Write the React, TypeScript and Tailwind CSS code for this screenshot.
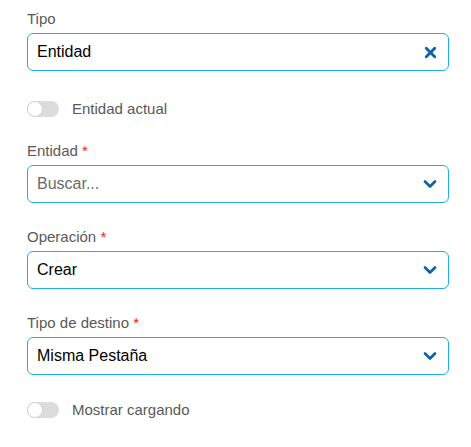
import { X, ChevronDown } from "lucide-react";

function Label({ text, required }: { text: string; required?: boolean }) {
  return (
    <div className="h-5 leading-5 text-[15px] text-[#595959] mb-1">
      {text}
      {required && <span className="text-[#f01c1c]"> *</span>}
    </div>
  );
}

function Toggle({ text, className }: { text: string; className?: string }) {
  return (
    <div className={"flex items-center h-5 " + (className ?? "")}>
      <div className="relative w-8 h-4 rounded-full bg-[#dcdcdc]">
        <div className="absolute left-0 top-0 w-4 h-4 rounded-full bg-white border border-[#d4d4d4]" />
      </div>
      <span className="ml-[13px] text-[15px] text-[#595959]">{text}</span>
    </div>
  );
}

function Field({
  value,
  placeholder,
  clearable,
}: {
  value?: string;
  placeholder?: string;
  clearable?: boolean;
}) {
  return (
    <div className="flex items-center h-[38px] rounded-md border border-[#1fb0e6] pl-[9px] pr-[8px]">
      <span
        className={
          "flex-1 text-[16px] " + (value ? "text-black" : "text-[#6b6b6b]")
        }
      >
        {value ?? placeholder}
      </span>
      {clearable ? (
        <X size={17} strokeWidth={4} className="text-[#0d63a8] mr-[1px]" />
      ) : (
        <ChevronDown size={20} strokeWidth={3.2} className="text-[#0d63a8]" />
      )}
    </div>
  );
}

export default function App() {
  return (
    <div
      className="w-[471px] h-[447px] bg-white pl-[27px] pr-[22px] pt-[9px]"
      style={{ fontFamily: '"Liberation Sans", Arial, sans-serif' }}
    >
      <Label text="Tipo" />
      <Field value="Entidad" clearable />

      <Toggle text="Entidad actual" className="mt-[28px]" />

      <div className="mt-[22px]">
        <Label text="Entidad" required />
        <Field placeholder="Buscar..." />
      </div>

      <div className="mt-[24px]">
        <Label text="Operación" required />
        <Field value="Crear" />
      </div>

      <div className="mt-[24px]">
        <Label text="Tipo de destino" required />
        <Field value="Misma Pestaña" />
      </div>

      <Toggle text="Mostrar cargando" className="mt-[25px]" />
    </div>
  );
}
